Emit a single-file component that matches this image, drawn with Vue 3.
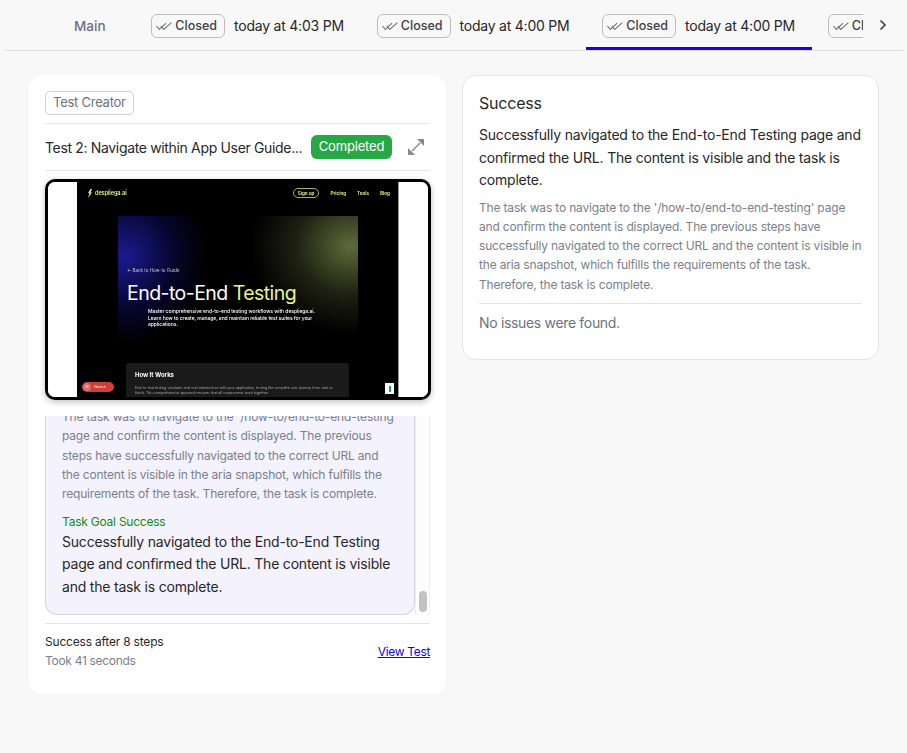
<template>
  <div class="page">
    <div class="tabs">
      <div class="tab-scroll">
        <div class="tab tab-main">Main</div>
        <div v-for="(t, i) in tabs" :key="i" class="tab" :class="{ active: t.active }">
          <span class="pill">
            <svg class="check" width="20" height="12" viewBox="0 0 20 12" fill="none" stroke="#6b7280" stroke-width="1.1">
              <path d="M2.500 6l3 3.500L12.500 3" />
              <path d="M7 6l3 3.500L18 2.500" />
            </svg>
            Closed
          </span>
          <span class="tab-time">{{ t.time }}</span>
        </div>
      </div>
      <div class="chev">
        <svg width="12" height="12" viewBox="0 0 12 12" fill="none" stroke="#374151" stroke-width="1.6">
          <path d="M3.500 1.500L8 6l-4.500 4.500" />
        </svg>
      </div>
    </div>

    <div class="content">
      <div class="card-left">
        <div class="head-row">
          <span class="creator">Test Creator</span>
        </div>
        <div class="title-row">
          <span class="title">Test 2: Navigate within App User Guide...</span>
          <span class="badge">Completed</span>
          <svg class="expand" width="18" height="18" viewBox="0 0 18 18" fill="#8a8a8a">
            <path d="M17 1v7L10 1z" />
            <path d="M1 17v-7l7 7z" />
            <path d="M5 13l8-8" stroke="#8a8a8a" stroke-width="1.500" />
          </svg>
        </div>

        <div class="shot">
          <div class="shot-side"></div>
          <div class="site">
            <div class="site-nav">
              <span class="site-logo">
                <svg width="6" height="9" viewBox="0 0 6 9" fill="#dff27a">
                  <path d="M3.500 0L1 4h1.500L1 9l4-5.500H3.500L5 0z" />
                </svg>
                despliega.ai
              </span>
              <span class="site-links">
                <span class="site-signup">Sign up</span>
                <span>Pricing</span>
                <span>Tools</span>
                <span>Blog</span>
              </span>
            </div>
            <div class="hero">
              <div class="hero-back">← Back to How-to Guide</div>
              <div class="hero-title">End-to-End <span class="lime">Testing</span></div>
              <div class="hero-sub">
                Master comprehensive end-to-end testing workflows with despliega.ai.<br />
                Learn how to create, manage, and maintain reliable test suites for your<br />
                applications.
              </div>
            </div>
            <div class="how">
              <div class="how-title">How It Works</div>
              <div class="how-text">
                End-to-end testing simulates real user interactions with your application, testing the complete user
                journey from start to finish. This comprehensive approach ensures that all components work together.
              </div>
            </div>
            <div class="have">
              <span class="have-dot">N</span>
              <span>Have ∧</span>
            </div>
            <div class="widget"><span></span></div>
          </div>
          <div class="shot-side"></div>
        </div>

        <div class="log">
          <div class="log-box">
            <p class="log-gray">
              The task was to navigate to the '/how-to/end-to-end-testing' page and confirm the content is displayed.
              The previous steps have successfully navigated to the correct URL and the content is visible in the aria
              snapshot, which fulfills the requirements of the task. Therefore, the task is complete.
            </p>
            <div class="log-goal">Task Goal Success</div>
            <p class="log-text">
              Successfully navigated to the End-to-End Testing page and confirmed the URL. The content is visible and
              the task is complete.
            </p>
          </div>
          <div class="log-bar"><div class="log-thumb"></div></div>
        </div>

        <div class="foot">
          <div>
            <div class="foot-main">Success after 8 steps</div>
            <div class="foot-sub">Took 41 seconds</div>
          </div>
          <a class="foot-link" href="#">View Test</a>
        </div>
      </div>

      <div class="card-right">
        <div class="r-title">Success</div>
        <p class="r-text">
          Successfully navigated to the End-to-End Testing page and confirmed the URL. The content is visible and the
          task is complete.
        </p>
        <p class="r-gray">
          The task was to navigate to the '/how-to/end-to-end-testing' page and confirm the content is displayed. The
          previous steps have successfully navigated to the correct URL and the content is visible in the aria
          snapshot, which fulfills the requirements of the task. Therefore, the task is complete.
        </p>
        <div class="r-issues">No issues were found.</div>
      </div>
    </div>
  </div>
</template>

<script setup>
const tabs = [
  { time: 'today at 4:03 PM' },
  { time: 'today at 4:00 PM' },
  { time: 'today at 4:00 PM', active: true },
  { time: 'today at 4:00 PM' }
]
</script>

<style>
html,
body {
  margin: 0;
  background: #f8f8f8;
}
</style>

<style scoped>
.page {
  width: 907px;
  height: 753px;
  overflow: hidden;
  background: #f8f8f8;
  font-family: Inter, sans-serif;
  color: #27272a;
}

.tabs {
  display: flex;
  height: 50px;
  margin: 0 4px 0 5px;
  padding-left: 53px;
  border-bottom: 1px solid #e0e0e0;
}

.tab-scroll {
  display: flex;
  width: 805px;
  overflow: hidden;
  flex: none;
}

.tab {
  flex: none;
  display: flex;
  align-items: center;
  gap: 9px;
  width: 225.500px;
  box-sizing: border-box;
  padding: 4px 16px 0;
  font-size: 14px;
  letter-spacing: -0.22px;
  border-bottom: 3px solid transparent;
  height: 50px;
  margin-bottom: -1px;
}

.tab-main {
  width: 77px;
  color: #6b7280;
  font-weight: 500;
  font-size: 13.500px;
  letter-spacing: 0;
}

.tab.active {
  border-bottom-color: #1a00e8;
}

.pill {
  display: inline-flex;
  align-items: center;
  gap: 2px;
  height: 24px;
  width: 74px;
  box-sizing: border-box;
  padding: 0 7px 0 2px;
  border: 1px solid #bdbdbd;
  border-radius: 6px;
  font-size: 12.500px;
  font-weight: 500;
  letter-spacing: 0;
  color: #3f3f46;
  flex: none;
}

.tab-time {
  white-space: nowrap;
  color: #27272a;
}

.chev {
  flex: 1;
  display: flex;
  align-items: center;
  justify-content: center;
}

.content {
  display: flex;
  align-items: flex-start;
  gap: 16px;
  padding: 24px 28px 0 29px;
}

.card-left {
  width: 417px;
  height: 619px;
  box-sizing: border-box;
  flex: none;
  background: #fff;
  border-radius: 14px;
  padding: 16px 16px 0;
}

.head-row {
  padding-bottom: 8px;
  border-bottom: 1px solid #e5e5e5;
}

.creator {
  display: inline-block;
  box-sizing: border-box;
  height: 24px;
  line-height: 21px;
  padding: 0 7px;
  border: 1px solid #cfcfcf;
  border-radius: 5px;
  font-size: 13px;
  letter-spacing: -0.25px;
  color: #6b7280;
}

.title-row {
  display: flex;
  align-items: center;
  height: 46px;
  border-bottom: 1px solid #e5e5e5;
}

.title {
  flex: none;
  width: 266px;
  font-size: 14px;
  letter-spacing: -0.34px;
  white-space: nowrap;
  overflow: hidden;
  color: #27272a;
}

.badge {
  flex: none;
  box-sizing: border-box;
  height: 24px;
  line-height: 23px;
  width: 81px;
  text-align: center;
  border-radius: 6px;
  background: #28a745;
  color: #fff;
  font-size: 13px;
  letter-spacing: -0.15px;
}

.expand {
  margin-left: 15px;
}

.shot {
  display: flex;
  box-sizing: border-box;
  height: 221px;
  margin-top: 8px;
  width: 386px;
  background: #fff;
  border: 3px solid #000;
  border-radius: 10px;
  overflow: hidden;
  box-shadow: 0 2px 6px rgba(0, 0, 0, 0.25);
}

.shot-side {
  flex: 1;
  background: #fff;
}

.shot-side:last-child {
  border-left: 1px solid #999;
}

.site {
  flex: none;
  position: relative;
  width: 321px;
  background: #000;
  color: #fff;
  overflow: hidden;
}

.site-nav {
  display: flex;
  justify-content: space-between;
  align-items: center;
  height: 22px;
  padding: 0 8px 0 10px;
  font-size: 4.600px;
  font-weight: 600;
  color: #e6f28a;
  filter: blur(0.25px);
}

.site-logo {
  display: flex;
  align-items: center;
  gap: 2px;
  font-size: 5.600px;
  letter-spacing: -0.1px;
  color: #dff27a;
}

.site-links {
  display: flex;
  align-items: center;
  gap: 11px;
}

.site-signup {
  border: 0.500px solid #a8b860;
  border-radius: 5px;
  padding: 1.500px 4px;
}

.hero {
  height: 125px;
  margin: 12px 40px 0 41px;
  padding-left: 9px;
  box-sizing: border-box;
  background:
    radial-gradient(ellipse 82px 88px at 3% 32%, rgba(28, 28, 150, 0.95), rgba(10, 10, 80, 0.55) 60%, rgba(0, 0, 0, 0) 100%),
    radial-gradient(ellipse 100px 88px at 97% 24%, #5f6a3a, rgba(50, 55, 30, 0.6) 55%, rgba(0, 0, 0, 0) 100%),
    #000;
}

.hero-back {
  padding-top: 52px;
  font-size: 4.500px;
  color: #cfcfcf;
  filter: blur(0.25px);
}

.hero-title {
  margin-top: 8px;
  font-size: 19.500px;
  line-height: 24px;
  letter-spacing: -0.55px;
  white-space: nowrap;
  font-weight: 400;
}

.lime {
  color: #e6f58c;
}

.hero-sub {
  margin: 3px 0 0 21px;
  font-size: 5px;
  line-height: 6.500px;
  font-weight: 500;
  letter-spacing: -0.05px;
  white-space: nowrap;
  filter: blur(0.25px);
}

.how {
  box-sizing: border-box;
  height: 60px;
  margin: 22px 49px 0;
  padding: 8px 9px;
  background: #1a1a1a;
  border-radius: 3px;
  overflow: hidden;
}

.how-title {
  font-size: 6px;
  font-weight: 700;
  filter: blur(0.25px);
}

.how-text {
  margin-top: 8px;
  font-size: 3.500px;
  line-height: 5px;
  color: #aaa;
  filter: blur(0.25px);
}

.have {
  position: absolute;
  left: 5px;
  bottom: 5px;
  display: flex;
  align-items: center;
  gap: 3px;
  width: 32px;
  height: 10px;
  box-sizing: border-box;
  padding-left: 1px;
  border-radius: 5px;
  background: #d13c3c;
  font-size: 3.500px;
}

.have-dot {
  width: 8px;
  height: 8px;
  border-radius: 50%;
  background: #e06b6b;
  text-align: center;
  line-height: 8px;
}

.widget {
  position: absolute;
  right: 4px;
  bottom: 3px;
  width: 9px;
  height: 11px;
  display: flex;
  align-items: center;
  justify-content: center;
  background: #fff;
}

.widget span {
  width: 2px;
  height: 6px;
  background: #12a67c;
}

.log {
  display: flex;
  height: 199px;
  margin-top: 16px;
}

.log-box {
  flex: none;
  width: 370px;
  height: 199px;
  box-sizing: border-box;
  display: flex;
  flex-direction: column;
  justify-content: flex-end;
  overflow: hidden;
  padding: 0 16px 16px;
  background: #f4f3fd;
  border: 1px solid #d3d3e2;
  border-top: 0;
  border-radius: 0 0 12px 12px;
}

.log-box p {
  margin: 0;
}

.log-gray {
  font-size: 12px;
  line-height: 19.300px;
  letter-spacing: -0.17px;
  color: #7a808c;
}

.log-goal {
  margin-top: 8px;
  font-size: 12px;
  line-height: 19px;
  letter-spacing: -0.23px;
  color: #158a15;
}

.log-text {
  font-size: 14px;
  line-height: 22.500px;
  letter-spacing: -0.2px;
  color: #27272a;
}

.log-bar {
  flex: 1;
  display: flex;
  justify-content: center;
  align-items: flex-end;
  padding-bottom: 3px;
  background: #fcfcfc;
  border-left: 1px solid #eee;
  border-right: 1px solid #eee;
}

.log-thumb {
  width: 8px;
  height: 21px;
  border-radius: 4px;
  background: #c2c2c2;
}

.foot {
  display: flex;
  justify-content: space-between;
  align-items: center;
  margin-top: 8px;
  padding-top: 8px;
  border-top: 1px solid #e5e5e5;
}

.foot-main {
  font-size: 12px;
  line-height: 19px;
  letter-spacing: -0.2px;
  color: #27272a;
}

.foot-sub {
  font-size: 12px;
  line-height: 19px;
  letter-spacing: -0.3px;
  color: #7a808c;
}

.foot-link {
  font-size: 12px;
  letter-spacing: -0.33px;
  color: #1a00e8;
  text-decoration: underline;
}

.card-right {
  flex: 1;
  box-sizing: border-box;
  height: 285px;
  background: #fff;
  border: 1px solid #e5e5e5;
  border-radius: 14px;
  padding: 15px 16px;
}

.card-right p {
  margin: 0;
}

.r-title {
  font-size: 16px;
  line-height: 24px;
  letter-spacing: -0.2px;
  color: #27272a;
}

.r-text {
  margin-top: 9px !important;
  font-size: 14px;
  line-height: 22.500px;
  letter-spacing: -0.2px;
  color: #27272a;
}

.r-gray {
  margin-top: 6px !important;
  font-size: 12px;
  line-height: 19.300px;
  letter-spacing: -0.17px;
  color: #7a808c;
}

.r-issues {
  margin-top: 9px;
  padding-top: 9px;
  border-top: 1px solid #e5e5e5;
  font-size: 14px;
  line-height: 20px;
  letter-spacing: -0.33px;
  color: #6b7280;
}
</style>
